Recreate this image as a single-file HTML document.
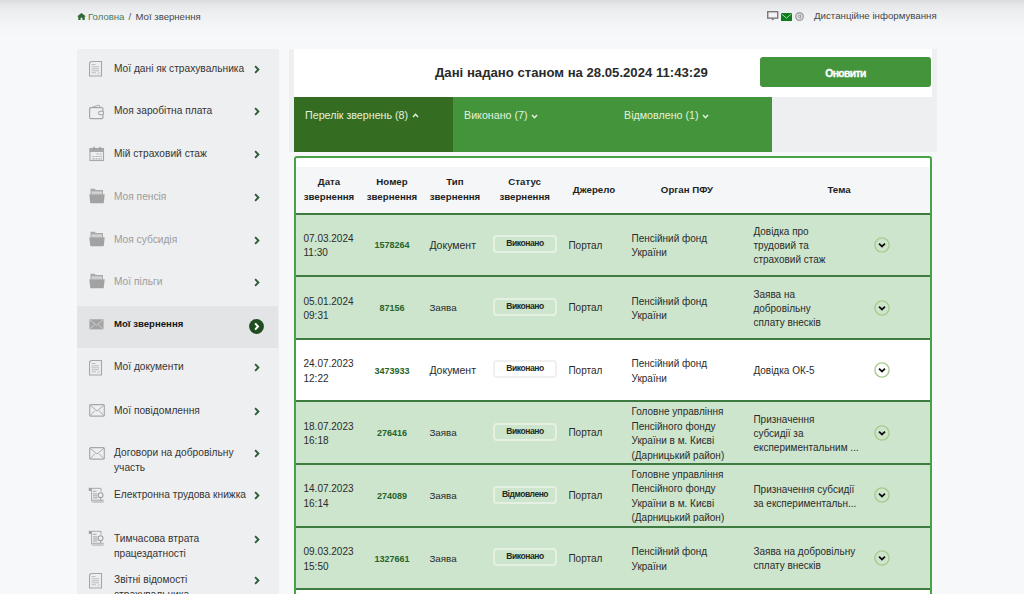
<!DOCTYPE html>
<html><head><meta charset="utf-8">
<style>
*{margin:0;padding:0;box-sizing:border-box}
html,body{width:1024px;height:594px;overflow:hidden}
body{background:#f7f8fa;font-family:"Liberation Sans",sans-serif;position:relative;color:#333}
.a{position:absolute;white-space:nowrap}
.c{font-size:10px;color:#2b2b2b;line-height:14.5px}
.num{font-size:9px;font-weight:bold;color:#25642a;text-align:center;width:60px;line-height:12px}
.badge{width:64px;height:18px;border:2px solid #e4f1e2;border-radius:4px;font-size:8.5px;letter-spacing:-0.45px;font-weight:bold;color:#1d2a1d;text-align:center;line-height:13px}
.hc{font-size:9.7px;font-weight:bold;color:#1e1e1e;text-align:center;line-height:15px;width:100px}
.st{font-size:10.2px;line-height:14.5px}
.tab{top:97px;height:55px;background:#43943b;color:#e3f2df;font-size:10.7px;padding:11px 0 0 11px;line-height:14px}
</style></head><body>
<div class="a" style="left:0;top:0;width:1024px;height:38px;background:linear-gradient(#d9dadc,#e6e7e9 12%,#eeeff1 35%,#f4f5f7 65%,#f7f8fa)"></div>
<svg class="a" style="left:76.5px;top:12.5px" width="9" height="7" viewBox="0 0 9 7"><path d="M4.5 0 L9 3.6 L7.7 3.6 L7.7 7 L5.4 7 L5.4 4.8 L3.6 4.8 L3.6 7 L1.3 7 L1.3 3.6 L0 3.6 Z" fill="#2d6a37"/></svg>
<div class="a" style="left:88px;top:10.5px;font-size:9.6px;color:#4b7a5a;line-height:12px">Головна</div>
<div class="a" style="left:128.5px;top:10.5px;font-size:9.6px;color:#555;line-height:12px">/</div>
<div class="a" style="left:135.5px;top:10.5px;font-size:9.6px;color:#454545;line-height:12px">Мої звернення</div>
<svg class="a" style="left:766.5px;top:11px" width="12" height="10" viewBox="0 0 12 10"><rect x="0.7" y="0.7" width="10" height="6.4" fill="#f4f2f4" stroke="#7a7a7a" stroke-width="1.4"/><rect x="4.7" y="7.5" width="2" height="1.6" fill="#7a7a7a"/></svg>
<svg class="a" style="left:781px;top:12.5px" width="11" height="8" viewBox="0 0 11 8"><rect x="0" y="0" width="11" height="8" rx="0.6" fill="#0f7d1c"/><path d="M0.6 0.9 L5.5 5.2 L10.4 0.9" fill="none" stroke="#9fdca5" stroke-width="1"/></svg>
<svg class="a" style="left:795px;top:12px" width="9" height="9" viewBox="0 0 9 9"><circle cx="4.5" cy="4.5" r="3.8" fill="#e4dfe4" stroke="#a3a3a3" stroke-width="1.4"/><path d="M5.6 2.4 V6.4" stroke="#a3a3a3" stroke-width="1.1"/><circle cx="4.3" cy="4.4" r="1.2" fill="none" stroke="#a3a3a3" stroke-width="1"/></svg>
<div class="a" style="left:814px;top:10.4px;font-size:9.7px;color:#454545;line-height:12px">Дистанційне інформування</div>
<div class="a" style="left:77px;top:49px;width:201.5px;height:560px;background:#eeeff1;border-radius:3px 3px 0 0"></div>
<div class="a" style="left:77px;top:305.5px;width:201px;height:42px;background:#e3e4e6"></div>
<div class="a" style="left:88.5px;top:61px;line-height:0"><svg width="15" height="16" viewBox="0 0 15 16"><path d="M0.5 2 L2 0.5 H12.5 V15 H0.5 Z" fill="none" stroke="#a6a6a6" stroke-width="1.1"/><path d="M2.5 3.5h4M2.5 5.8h7.5M2.5 7.8h7.5M2.5 9.8h7.5M2.5 11.8h4.5M8.3 13.2l2.5-1.8" stroke="#b8b8b8" stroke-width="0.9"/></svg></div>
<div class="a st" style="left:114px;top:61.5px;color:#353535;">Мої дані як страхувальника</div>
<div class="a" style="left:254px;top:64.5px;line-height:0"><svg width="6" height="9" viewBox="0 0 6 9"><path d="M1.1 1.1 L4.4 4.5 L1.1 7.9" fill="none" stroke="#2d5b37" stroke-width="1.9"/></svg></div>
<div class="a" style="left:88.5px;top:103.6px;line-height:0"><svg width="16" height="16" viewBox="0 0 16 16"><path d="M1.2 4 L9.5 1.2 L10.5 1.5 L11 3.6" fill="none" stroke="#a8a8a8" stroke-width="1"/><rect x="0.6" y="3.6" width="13.3" height="11" rx="1" fill="none" stroke="#a6a6a6" stroke-width="1.2"/><rect x="9.6" y="7.2" width="5" height="3.6" rx="1.6" fill="#eeeff1" stroke="#a6a6a6" stroke-width="1.1"/></svg></div>
<div class="a st" style="left:114px;top:104.1px;color:#353535;">Моя заробітна плата</div>
<div class="a" style="left:254px;top:107.1px;line-height:0"><svg width="6" height="9" viewBox="0 0 6 9"><path d="M1.1 1.1 L4.4 4.5 L1.1 7.9" fill="none" stroke="#2d5b37" stroke-width="1.9"/></svg></div>
<div class="a" style="left:88.5px;top:145.5px;line-height:0"><svg width="16" height="16" viewBox="0 0 16 16"><rect x="0.5" y="2.5" width="14.5" height="3.5" fill="#a8a8a8"/><rect x="1" y="2.5" width="13.5" height="12" fill="none" stroke="#a8a8a8" stroke-width="1.1"/><path d="M5 0.8v3M11 0.8v3" stroke="#9a9a9a" stroke-width="1.3"/><path d="M7.5 8h2M10.5 8h2M3.5 10.5h2M6.5 10.5h2M9.5 10.5h2M12 10.5h1M3.5 12.8h2M6.5 12.8h2M9.5 12.8h2M12 12.8h1" stroke="#b0b0b0" stroke-width="1.2"/></svg></div>
<div class="a st" style="left:114px;top:146.8px;color:#353535;">Мій страховий стаж</div>
<div class="a" style="left:254px;top:149.8px;line-height:0"><svg width="6" height="9" viewBox="0 0 6 9"><path d="M1.1 1.1 L4.4 4.5 L1.1 7.9" fill="none" stroke="#2d5b37" stroke-width="1.9"/></svg></div>
<div class="a" style="left:88.5px;top:188.2px;line-height:0"><svg width="16" height="16" viewBox="0 0 16 16"><path d="M1.5 0.8 h4.2 l1 1.2 h7.3 v4 h-12.5z" fill="#a9a9a9"/><rect x="2.6" y="3.4" width="10.4" height="2.4" fill="#d4d4d4"/><path d="M0.3 6.3 h15.4 l-1 9 h-13.4z" fill="#a2a2a2"/></svg></div>
<div class="a st" style="left:114px;top:189.9px;color:#9c9c9c;">Моя пенсія</div>
<div class="a" style="left:254px;top:192.9px;line-height:0"><svg width="6" height="9" viewBox="0 0 6 9"><path d="M1.1 1.1 L4.4 4.5 L1.1 7.9" fill="none" stroke="#2d5b37" stroke-width="1.9"/></svg></div>
<div class="a" style="left:88.5px;top:230.7px;line-height:0"><svg width="16" height="16" viewBox="0 0 16 16"><path d="M1.5 0.8 h4.2 l1 1.2 h7.3 v4 h-12.5z" fill="#a9a9a9"/><rect x="2.6" y="3.4" width="10.4" height="2.4" fill="#d4d4d4"/><path d="M0.3 6.3 h15.4 l-1 9 h-13.4z" fill="#a2a2a2"/></svg></div>
<div class="a st" style="left:114px;top:232.5px;color:#9c9c9c;">Моя субсидія</div>
<div class="a" style="left:254px;top:235.5px;line-height:0"><svg width="6" height="9" viewBox="0 0 6 9"><path d="M1.1 1.1 L4.4 4.5 L1.1 7.9" fill="none" stroke="#2d5b37" stroke-width="1.9"/></svg></div>
<div class="a" style="left:88.5px;top:273.2px;line-height:0"><svg width="16" height="16" viewBox="0 0 16 16"><path d="M1.5 0.8 h4.2 l1 1.2 h7.3 v4 h-12.5z" fill="#a9a9a9"/><rect x="2.6" y="3.4" width="10.4" height="2.4" fill="#d4d4d4"/><path d="M0.3 6.3 h15.4 l-1 9 h-13.4z" fill="#a2a2a2"/></svg></div>
<div class="a st" style="left:114px;top:275.0px;color:#9c9c9c;">Мої пільги</div>
<div class="a" style="left:254px;top:278.0px;line-height:0"><svg width="6" height="9" viewBox="0 0 6 9"><path d="M1.1 1.1 L4.4 4.5 L1.1 7.9" fill="none" stroke="#2d5b37" stroke-width="1.9"/></svg></div>
<div class="a" style="left:88.5px;top:319.2px;line-height:0"><svg width="15" height="11" viewBox="0 0 16 12"><rect x="0.3" y="0.3" width="15.4" height="11" fill="#a3a3a3"/><path d="M0.5 0.8 L8 7 L15.5 0.8M0.5 11 L6 6.2M15.5 11 L10 6.2" fill="none" stroke="#cfcfcf" stroke-width="1"/></svg></div>
<div class="a st" style="left:114px;top:317.1px;color:#141414;font-weight:bold;font-size:9.6px;">Мої звернення</div>
<div class="a" style="left:249px;top:318.8px;line-height:0"><svg width="15" height="15" viewBox="0 0 15 15"><circle cx="7.5" cy="7.5" r="7.4" fill="#1f4d1f"/><path d="M6.1 4.4 L9 7.5 L6.1 10.6" fill="none" stroke="#fff" stroke-width="2"/></svg></div>
<div class="a" style="left:88.5px;top:359.5px;line-height:0"><svg width="15" height="16" viewBox="0 0 15 16"><path d="M0.5 2 L2 0.5 H12.5 V15 H0.5 Z" fill="none" stroke="#a6a6a6" stroke-width="1.1"/><path d="M2.5 3.5h4M2.5 5.8h7.5M2.5 7.8h7.5M2.5 9.8h7.5M2.5 11.8h4.5M8.3 13.2l2.5-1.8" stroke="#b8b8b8" stroke-width="0.9"/></svg></div>
<div class="a st" style="left:114px;top:360.3px;color:#353535;">Мої документи</div>
<div class="a" style="left:254px;top:363.3px;line-height:0"><svg width="6" height="9" viewBox="0 0 6 9"><path d="M1.1 1.1 L4.4 4.5 L1.1 7.9" fill="none" stroke="#2d5b37" stroke-width="1.9"/></svg></div>
<div class="a" style="left:88.5px;top:403.5px;line-height:0"><svg width="16" height="13" viewBox="0 0 16 13"><rect x="0.7" y="0.7" width="14.6" height="11.4" rx="1" fill="none" stroke="#a8a8a8" stroke-width="1.2"/><path d="M1 1.2 L8 7 L15 1.2M1 11.8 L6 6.6M15 11.8 L10 6.6" fill="none" stroke="#ababab" stroke-width="1"/></svg></div>
<div class="a st" style="left:114px;top:403.5px;color:#353535;">Мої повідомлення</div>
<div class="a" style="left:254px;top:406.5px;line-height:0"><svg width="6" height="9" viewBox="0 0 6 9"><path d="M1.1 1.1 L4.4 4.5 L1.1 7.9" fill="none" stroke="#2d5b37" stroke-width="1.9"/></svg></div>
<div class="a" style="left:88.5px;top:446.5px;line-height:0"><svg width="16" height="13" viewBox="0 0 16 13"><rect x="0.7" y="0.7" width="14.6" height="11.4" rx="1" fill="none" stroke="#a8a8a8" stroke-width="1.2"/><path d="M1 1.2 L8 7 L15 1.2M1 11.8 L6 6.6M15 11.8 L10 6.6" fill="none" stroke="#ababab" stroke-width="1"/></svg></div>
<div class="a st" style="left:114px;top:446.2px;color:#353535;">Договори на добровільну</div>
<div class="a st" style="left:114px;top:461.0px;color:#353535;">участь</div>
<div class="a" style="left:254px;top:449.2px;line-height:0"><svg width="6" height="9" viewBox="0 0 6 9"><path d="M1.1 1.1 L4.4 4.5 L1.1 7.9" fill="none" stroke="#2d5b37" stroke-width="1.9"/></svg></div>
<div class="a" style="left:87.6px;top:486.8px;line-height:0"><svg width="16" height="16" viewBox="0 0 16 16"><rect x="0.8" y="0.8" width="2.6" height="3.2" fill="#a0a0a0"/><path d="M3.5 1.3 H13 V4.6M3.6 1 V14.5" fill="none" stroke="#a8a8a8" stroke-width="1"/><path d="M5 4.3h3.5M5 6.8h4.5M5 8.8h4.5M5 10.8h4.5" stroke="#b3b3b3" stroke-width="1.2"/><circle cx="12.6" cy="8.2" r="2.4" fill="none" stroke="#a0a0a0" stroke-width="1.1"/><path d="M12.6 10.6v2.5" stroke="#a0a0a0"/><path d="M4.2 13.3 H15.7 M4.2 15 H15.7" stroke="#a8a8a8" stroke-width="1.1"/></svg></div>
<div class="a st" style="left:114px;top:488.1px;color:#353535;">Електронна трудова книжка</div>
<div class="a" style="left:254px;top:491.1px;line-height:0"><svg width="6" height="9" viewBox="0 0 6 9"><path d="M1.1 1.1 L4.4 4.5 L1.1 7.9" fill="none" stroke="#2d5b37" stroke-width="1.9"/></svg></div>
<div class="a" style="left:87.6px;top:530.3px;line-height:0"><svg width="16" height="16" viewBox="0 0 16 16"><rect x="0.8" y="0.8" width="2.6" height="3.2" fill="#a0a0a0"/><path d="M3.5 1.3 H13 V4.6M3.6 1 V14.5" fill="none" stroke="#a8a8a8" stroke-width="1"/><path d="M5 4.3h3.5M5 6.8h4.5M5 8.8h4.5M5 10.8h4.5" stroke="#b3b3b3" stroke-width="1.2"/><circle cx="12.6" cy="8.2" r="2.4" fill="none" stroke="#a0a0a0" stroke-width="1.1"/><path d="M12.6 10.6v2.5" stroke="#a0a0a0"/><path d="M4.2 13.3 H15.7 M4.2 15 H15.7" stroke="#a8a8a8" stroke-width="1.1"/></svg></div>
<div class="a st" style="left:114px;top:532.1px;color:#353535;">Тимчасова втрата</div>
<div class="a st" style="left:114px;top:546.9px;color:#353535;">працездатності</div>
<div class="a" style="left:254px;top:535.1px;line-height:0"><svg width="6" height="9" viewBox="0 0 6 9"><path d="M1.1 1.1 L4.4 4.5 L1.1 7.9" fill="none" stroke="#2d5b37" stroke-width="1.9"/></svg></div>
<div class="a" style="left:88.5px;top:572.5px;line-height:0"><svg width="15" height="16" viewBox="0 0 15 16"><path d="M0.5 2 L2 0.5 H12.5 V15 H0.5 Z" fill="none" stroke="#a6a6a6" stroke-width="1.1"/><path d="M2.5 3.5h4M2.5 5.8h7.5M2.5 7.8h7.5M2.5 9.8h7.5M2.5 11.8h4.5M8.3 13.2l2.5-1.8" stroke="#b8b8b8" stroke-width="0.9"/></svg></div>
<div class="a st" style="left:114px;top:573.2px;color:#353535;">Звітні відомості</div>
<div class="a st" style="left:114px;top:588.0px;color:#353535;">страхувальника</div>
<div class="a" style="left:254px;top:576.2px;line-height:0"><svg width="6" height="9" viewBox="0 0 6 9"><path d="M1.1 1.1 L4.4 4.5 L1.1 7.9" fill="none" stroke="#2d5b37" stroke-width="1.9"/></svg></div>
<div class="a" style="left:289px;top:49px;width:648px;height:103px;background:#eeeff1"></div>
<div class="a" style="left:294px;top:49px;width:638px;height:48px;background:#fff"></div>
<div class="a" style="left:435px;top:64.5px;font-size:13.15px;font-weight:bold;color:#2a2a2a;line-height:15px">Дані надано станом на 28.05.2024 11:43:29</div>
<div class="a" style="left:760px;top:57px;width:171px;height:30px;background:#43943b;border-radius:3px;color:#fff;font-weight:bold;font-size:10.4px;letter-spacing:-0.65px;text-align:center;line-height:33px;-webkit-text-stroke:0.3px #fff">Оновити</div>
<div class="a tab" style="left:294px;width:159px;background:#346c22">Перелік звернень (8)<svg width="7" height="5" viewBox="0 0 7 5" style="vertical-align:1px;margin-left:4px"><path d="M1 4 L3.5 1.3 L6 4" fill="none" stroke="#e3f2df" stroke-width="1.5"/></svg></div>
<div class="a tab" style="left:453px;width:160px">Виконано (7)<svg width="7" height="5" viewBox="0 0 7 5" style="vertical-align:0.5px;margin-left:3px"><path d="M1 1 L3.5 3.7 L6 1" fill="none" stroke="#e3f2df" stroke-width="1.5"/></svg></div>
<div class="a tab" style="left:613px;width:159px">Відмовлено (1)<svg width="7" height="5" viewBox="0 0 7 5" style="vertical-align:0.5px;margin-left:3px"><path d="M1 1 L3.5 3.7 L6 1" fill="none" stroke="#e3f2df" stroke-width="1.5"/></svg></div>
<div class="a" style="left:294px;top:156px;width:638px;height:460px;border:2px solid #48a346;border-radius:3px;background:#fff"></div>
<div class="a" style="left:296px;top:167px;width:634px;height:46px;background:#f5f6f8"></div>
<div class="a hc" style="left:279px;top:174.0px">Дата</div>
<div class="a hc" style="left:279px;top:189.0px">звернення</div>
<div class="a hc" style="left:342px;top:174.0px">Номер</div>
<div class="a hc" style="left:342px;top:189.0px">звернення</div>
<div class="a hc" style="left:405px;top:174.0px">Тип</div>
<div class="a hc" style="left:405px;top:189.0px">звернення</div>
<div class="a hc" style="left:474.70000000000005px;top:174.0px">Статус</div>
<div class="a hc" style="left:474.70000000000005px;top:189.0px">звернення</div>
<div class="a hc" style="left:544px;top:181.5px">Джерело</div>
<div class="a hc" style="left:637px;top:181.5px">Орган ПФУ</div>
<div class="a hc" style="left:789px;top:181.5px">Тема</div>
<div class="a" style="left:296px;top:212.55px;width:634px;height:62.63px;background:#cde5cd;border-top:2px solid #3d7b40"></div>
<div class="a c" style="left:303.5px;top:231.9px;">07.03.2024</div>
<div class="a c" style="left:303.5px;top:246.4px;">11:30</div>
<div class="a num" style="left:362px;top:239.4px">1578264</div>
<div class="a c" style="left:429.4px;top:237.6px;font-size:10.5px;">Документ</div>
<div class="a badge" style="left:493px;top:235.2px;border-color:#e4f1e2">Виконано</div>
<div class="a c" style="left:568.4px;top:238.5px;">Портал</div>
<div class="a c" style="left:631.5px;top:231.9px;">Пенсійний фонд</div>
<div class="a c" style="left:631.5px;top:246.4px;">України</div>
<div class="a c" style="left:753.4px;top:224.9px;">Довідка про</div>
<div class="a c" style="left:753.4px;top:239.1px;">трудовий та</div>
<div class="a c" style="left:753.4px;top:253.3px;">страховий стаж</div>
<div class="a" style="left:874px;top:236.9px;line-height:0"><svg width="16" height="16" viewBox="0 0 16 16"><circle cx="8" cy="8" r="7.1" fill="none" stroke="#a8cb8c" stroke-width="1.4"/><path d="M5 6.7 L8 9.5 L11 6.7" fill="none" stroke="#111" stroke-width="1.8"/></svg></div>
<div class="a" style="left:296px;top:275.18px;width:634px;height:62.63px;background:#cde5cd;border-top:2px solid #3d7b40"></div>
<div class="a c" style="left:303.5px;top:294.5px;">05.01.2024</div>
<div class="a c" style="left:303.5px;top:309.0px;">09:31</div>
<div class="a num" style="left:362px;top:302.0px">87156</div>
<div class="a c" style="left:429.4px;top:300.9px;font-size:9.8px;">Заява</div>
<div class="a badge" style="left:493px;top:297.8px;border-color:#e4f1e2">Виконано</div>
<div class="a c" style="left:568.4px;top:301.1px;">Портал</div>
<div class="a c" style="left:631.5px;top:294.5px;">Пенсійний фонд</div>
<div class="a c" style="left:631.5px;top:309.0px;">України</div>
<div class="a c" style="left:753.4px;top:287.5px;">Заява на</div>
<div class="a c" style="left:753.4px;top:301.7px;">добровільну</div>
<div class="a c" style="left:753.4px;top:315.9px;">сплату внесків</div>
<div class="a" style="left:874px;top:299.5px;line-height:0"><svg width="16" height="16" viewBox="0 0 16 16"><circle cx="8" cy="8" r="7.1" fill="none" stroke="#a8cb8c" stroke-width="1.4"/><path d="M5 6.7 L8 9.5 L11 6.7" fill="none" stroke="#111" stroke-width="1.8"/></svg></div>
<div class="a" style="left:296px;top:337.81px;width:634px;height:62.63px;background:#ffffff;border-top:2px solid #3d7b40"></div>
<div class="a c" style="left:303.5px;top:357.1px;">24.07.2023</div>
<div class="a c" style="left:303.5px;top:371.6px;">12:22</div>
<div class="a num" style="left:362px;top:364.6px">3473933</div>
<div class="a c" style="left:429.4px;top:362.9px;font-size:10.5px;">Документ</div>
<div class="a badge" style="left:493px;top:360.4px;border-color:#f0f0f0">Виконано</div>
<div class="a c" style="left:568.4px;top:363.8px;">Портал</div>
<div class="a c" style="left:631.5px;top:357.1px;">Пенсійний фонд</div>
<div class="a c" style="left:631.5px;top:371.6px;">України</div>
<div class="a c" style="left:753.4px;top:364.4px;">Довідка ОК-5</div>
<div class="a" style="left:874px;top:362.1px;line-height:0"><svg width="16" height="16" viewBox="0 0 16 16"><circle cx="8" cy="8" r="7.1" fill="none" stroke="#a8cb8c" stroke-width="1.4"/><path d="M5 6.7 L8 9.5 L11 6.7" fill="none" stroke="#111" stroke-width="1.8"/></svg></div>
<div class="a" style="left:296px;top:400.44px;width:634px;height:62.63px;background:#cde5cd;border-top:2px solid #3d7b40"></div>
<div class="a c" style="left:303.5px;top:419.7px;">18.07.2023</div>
<div class="a c" style="left:303.5px;top:434.2px;">16:18</div>
<div class="a num" style="left:362px;top:427.2px">276416</div>
<div class="a c" style="left:429.4px;top:426.2px;font-size:9.8px;">Заява</div>
<div class="a badge" style="left:493px;top:423.0px;border-color:#e4f1e2">Виконано</div>
<div class="a c" style="left:568.4px;top:426.4px;">Портал</div>
<div class="a c" style="left:631.5px;top:405.2px;">Головне управління</div>
<div class="a c" style="left:631.5px;top:419.7px;">Пенсійного фонду</div>
<div class="a c" style="left:631.5px;top:434.2px;">України в м. Києві</div>
<div class="a c" style="left:631.5px;top:448.7px;">(Дарницький район)</div>
<div class="a c" style="left:753.4px;top:412.8px;">Призначення</div>
<div class="a c" style="left:753.4px;top:427.0px;">субсидії за</div>
<div class="a c" style="left:753.4px;top:441.2px;">експериментальним ...</div>
<div class="a" style="left:874px;top:424.7px;line-height:0"><svg width="16" height="16" viewBox="0 0 16 16"><circle cx="8" cy="8" r="7.1" fill="none" stroke="#a8cb8c" stroke-width="1.4"/><path d="M5 6.7 L8 9.5 L11 6.7" fill="none" stroke="#111" stroke-width="1.8"/></svg></div>
<div class="a" style="left:296px;top:463.07px;width:634px;height:62.63px;background:#cde5cd;border-top:2px solid #3d7b40"></div>
<div class="a c" style="left:303.5px;top:482.4px;">14.07.2023</div>
<div class="a c" style="left:303.5px;top:496.9px;">16:14</div>
<div class="a num" style="left:362px;top:489.9px">274089</div>
<div class="a c" style="left:429.4px;top:488.8px;font-size:9.8px;">Заява</div>
<div class="a badge" style="left:493px;top:485.7px;border-color:#e4f1e2">Відмовлено</div>
<div class="a c" style="left:568.4px;top:489.0px;">Портал</div>
<div class="a c" style="left:631.5px;top:467.9px;">Головне управління</div>
<div class="a c" style="left:631.5px;top:482.4px;">Пенсійного фонду</div>
<div class="a c" style="left:631.5px;top:496.9px;">України в м. Києві</div>
<div class="a c" style="left:631.5px;top:511.4px;">(Дарницький район)</div>
<div class="a c" style="left:753.4px;top:482.5px;">Призначення субсидії</div>
<div class="a c" style="left:753.4px;top:496.7px;">за експериментальн...</div>
<div class="a" style="left:874px;top:487.4px;line-height:0"><svg width="16" height="16" viewBox="0 0 16 16"><circle cx="8" cy="8" r="7.1" fill="none" stroke="#a8cb8c" stroke-width="1.4"/><path d="M5 6.7 L8 9.5 L11 6.7" fill="none" stroke="#111" stroke-width="1.8"/></svg></div>
<div class="a" style="left:296px;top:525.70px;width:634px;height:62.63px;background:#cde5cd;border-top:2px solid #3d7b40"></div>
<div class="a c" style="left:303.5px;top:545.0px;">09.03.2023</div>
<div class="a c" style="left:303.5px;top:559.5px;">15:50</div>
<div class="a num" style="left:362px;top:552.5px">1327661</div>
<div class="a c" style="left:429.4px;top:551.5px;font-size:9.8px;">Заява</div>
<div class="a badge" style="left:493px;top:548.3px;border-color:#e4f1e2">Виконано</div>
<div class="a c" style="left:568.4px;top:551.6px;">Портал</div>
<div class="a c" style="left:631.5px;top:545.0px;">Пенсійний фонд</div>
<div class="a c" style="left:631.5px;top:559.5px;">України</div>
<div class="a c" style="left:753.4px;top:545.1px;">Заява на добровільну</div>
<div class="a c" style="left:753.4px;top:559.4px;">сплату внесків</div>
<div class="a" style="left:874px;top:550.0px;line-height:0"><svg width="16" height="16" viewBox="0 0 16 16"><circle cx="8" cy="8" r="7.1" fill="none" stroke="#a8cb8c" stroke-width="1.4"/><path d="M5 6.7 L8 9.5 L11 6.7" fill="none" stroke="#111" stroke-width="1.8"/></svg></div>
<div class="a" style="left:296px;top:588.33px;width:634px;height:20px;background:#fff;border-top:2px solid #3d7b40"></div>
</body></html>
